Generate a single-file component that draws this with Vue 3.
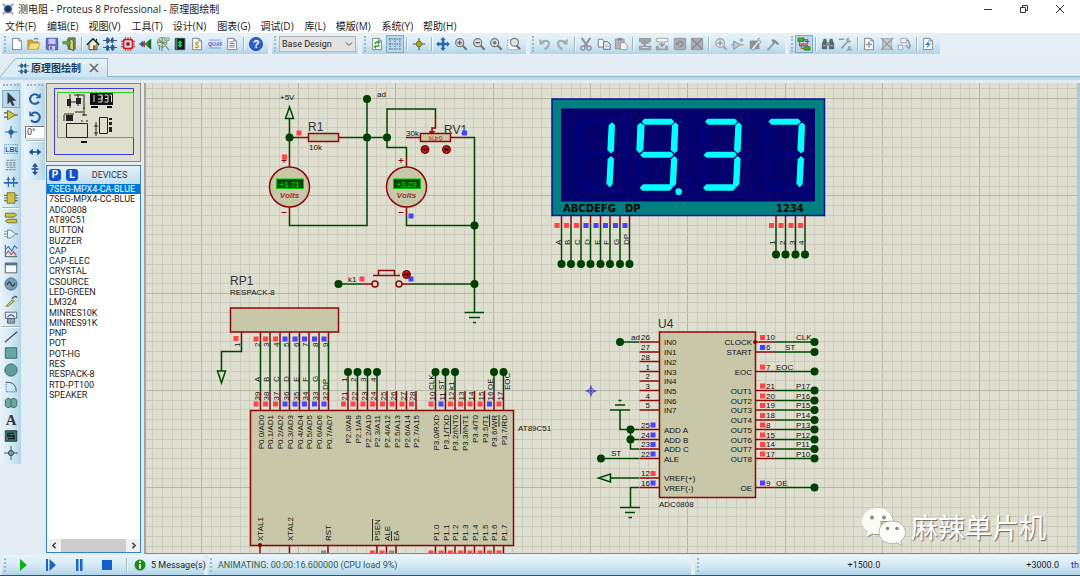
<script setup>
import { ref } from 'vue'

const menus = ['文件(F)', '编辑(E)', '视图(V)', '工具(T)', '设计(N)', '图表(G)', '调试(D)', '库(L)', '模版(M)', '系统(Y)', '帮助(H)']

const devices = ['7SEG-MPX4-CA-BLUE', '7SEG-MPX4-CC-BLUE', 'ADC0808', 'AT89C51', 'BUTTON', 'BUZZER', 'CAP', 'CAP-ELEC', 'CRYSTAL', 'CSOURCE', 'LED-GREEN', 'LM324', 'MINRES10K', 'MINRES91K', 'PNP', 'POT', 'POT-HG', 'RES', 'RESPACK-8', 'RTD-PT100', 'SPEAKER']
const selected = ref('7SEG-MPX4-CA-BLUE')
const angle = ref('0°')
const variant = ref('Base Design')

const sheet = '<path d="M3 1.5h7l3 3v10H3z" fill="#fff" stroke="#777"/><path d="M10 1.5v3h3" fill="none" stroke="#777"/>'
const lens = '<path d="M9.5 9.5l5 5" stroke="#777" stroke-width="2.6"/><circle cx="6.5" cy="6.5" r="4.6" fill="#d8dcdc" stroke="#777" stroke-width="1.4"/>'
const icons = {
  new: sheet,
  open: '<path d="M1 3.5h5l1 2h6v8H1z" fill="#d9a83a" stroke="#b5852a"/><path d="M1 14l3-7h11l-3 7z" fill="#fbe08c" stroke="#c99b3c"/><path d="M8 3q3-3 5 0" fill="none" stroke="#4a88c0" stroke-width="1.3"/>',
  save: '<path d="M1.5 1.5h13v13h-12l-1-1z" fill="#6a6fc8" stroke="#4248a0"/><path d="M4 2h8v6H4z" fill="#c6ccf2"/><path d="M4.5 10.5h7v4h-7z" fill="#dde"/><path d="M6 11h2v3H6z" fill="#444a9a"/>',
  exit: '<path d="M7 1h8v13H7z" fill="#8c8a4a" stroke="#565632"/><path d="M9 2l4 2v12l-4-3z" fill="#d8d68c" stroke="#55522e"/><path d="M1 5h5V2.5l4 4-4 4V8H1z" fill="#60a838" stroke="#42762c" stroke-width=".7"/>',
  home: '<path d="M3.5 8v6.5h9V8" fill="#f3ecc0" stroke="#333"/><path d="M1 9l7-7 7 7" fill="none" stroke="#222" stroke-width="1.8"/><path d="M8 9.5h3v5H8z" fill="#c04820"/><path d="M12 2v4" stroke="#333" stroke-width="1.5"/>',
  schematic: '<path d="M0 4h16M0 12h16" stroke="#264a68"/><path d="M5 0v8M5 9v7M11 0v7M11 8v8" stroke="#264a68"/><path d="M3.5 1.5h4v5h-4zM9 1.5h3v5H9zM3.5 10h3.5v5H3.5zM9 9.5h4v5H9z" fill="#2d5f86"/>',
  pcb: '<path d="M5 0v16M8 0v16M11 0v16M0 5h16M0 8h16M0 11h16" stroke="#e04040" stroke-width="1.2"/><rect x="3" y="3" width="10" height="10" rx="1.5" fill="#fff" stroke="#d41818" stroke-width="2"/><path d="M6 6h4v4H6z" fill="#a01010"/>',
  view3d: '<path d="M1 8l5-4v8z" fill="#2a6fa0"/><path d="M7 8l8-6v12z" fill="#26a042"/><path d="M4 8l4-4v8z" fill="#b03030"/><path d="M11 5l4-3v12l-4-3z" fill="#167030"/>',
  gerber: '<circle cx="7" cy="6" r="5.5" fill="#cde0cb" stroke="#6d8a6d"/><path d="M2 6h10M7 1v10M3 3l8 6M4 15V9M7 16v-6M11 10l4 5" stroke="#698b69" fill="none" stroke-width="1.2"/><path d="M10 1h5v3h-5z" fill="#b8d0b8" stroke="#6d8a6d" stroke-width=".7"/>',
  explorer: '<path d="M2.5 1.5h11v13h-11z" fill="#111" stroke="#3c5a50"/><path d="M8 4v8M5.5 6.5h5M5.5 9.500h5" stroke="#19c95c" stroke-width="2"/><path d="M3 2h2v12H3z" fill="#5f7a70"/>',
  bom: sheet + '<text x="5" y="12.5" font-size="10" font-family="Liberation Sans" fill="#9a8a28">$</text>',
  source: '<path d="M1 3.5h14M1 12.5h14" stroke="#8390d8"/><text x="0" y="10.5" font-size="6" font-weight="bold" font-family="Liberation Sans" fill="#4c5cc8">QUAP</text>',
  notes: sheet + '<path d="M5 5.5h5M5 7.5h6M5 9.5h6M5 11.5h6" stroke="#777"/>',
  help: '<circle cx="8" cy="8" r="7.5" fill="#2f62cc" stroke="#1d3f94"/><path d="M3 6q5-6 10 0" fill="#6f9aec" opacity=".7"/><text x="4.5" y="12.5" font-size="12" font-weight="bold" font-family="Liberation Sans" fill="#fff">?</text>',
  refresh: sheet + '<path d="M5 8q0-3.500 4-3V3l3 3-3 2.500V7Q7 6.500 7 8zM11 8.500q0 3.500-4 3V14l-3-3 3-2.500V10q2 .5 2-1.500z" fill="#38a038"/>',
  grid: '<path d="M2.5 1v14M8 1v14M13.5 1v14M1 2.5h14M1 8h14M1 13.5h14" stroke="#5a7894" stroke-width="1.5" stroke-dasharray="1.5 1.5"/>',
  origin: '<path d="M8 1v14M1 8h14" stroke="#555" stroke-width="1.3"/><circle cx="8" cy="8" r="3.2" fill="#b3a52a" stroke="#6d661e"/>',
  pan: '<path d="M8 0l3 3.500H9.500v3h3V5L16 8l-3.500 3V9.500h-3v3H11L8 16l-3-3.500h1.500v-3h-3V11L0 8l3.500-3v1.500h3v-3H5z" fill="#2a66b8"/>',
  zoomIn: lens + '<path d="M4 6.5h5M6.5 4v5" stroke="#444" stroke-width="1.2"/>',
  zoomOut: lens + '<path d="M4 6.5h5" stroke="#444" stroke-width="1.2"/>',
  zoomAll: lens + '<circle cx="6.5" cy="6.5" r="2" fill="#777"/>',
  zoomArea: '<path d="M.5 3.5h12v11H.5z" fill="#f4f8fa" stroke="#789" stroke-dasharray="1.5 1.5"/><path d="M11 10l4 4" stroke="#777" stroke-width="2.5"/><circle cx="8.5" cy="6" r="4.5" fill="#dfe5e8" stroke="#777" stroke-width="1.3"/>',
  undo: '<path d="M3.5 6Q13 2 12.5 8q-.5 4-5 6" fill="none" stroke="#a3adb3" stroke-width="2.4"/><path d="M1 2l1 7 6-2z" fill="#a3adb3"/>',
  redo: '<path d="M12.5 6Q3 2 3.5 8q.5 4 5 6" fill="none" stroke="#a3adb3" stroke-width="2.4"/><path d="M15 2l-1 7-6-2z" fill="#a3adb3"/>',
  cut: '<path d="M3 1l7 10M13 1L6 11" stroke="#949a9d" stroke-width="2.6"/><circle cx="4.5" cy="12.5" r="2.3" fill="none" stroke="#949a9d" stroke-width="1.8"/><circle cx="11.5" cy="12.5" r="2.3" fill="none" stroke="#949a9d" stroke-width="1.8"/>',
  copy: '<path d="M1.5 2.5H6l2 2v7H1.5z" fill="#f4f6fa" stroke="#68708a"/><path d="M7.5 5.5H12l3 2.5v6H7.5z" fill="#f4f6fa" stroke="#535b7c"/><path d="M9 9h4M9 11h5" stroke="#9aa"/>',
  paste: '<path d="M1.5 2.5h10v11h-10z" fill="#b4b4b0" stroke="#8f908e"/><path d="M4 1h5v3H4z" fill="#8b8c8c"/><path d="M7.5 6.5H12l3 3v5H7.5z" fill="#f3f3f3" stroke="#999"/>',
  blockCopy: '<path d="M1 1h14v5h-3l1 2H9v2h6v5H1v-5h5V8H3l1-2H1z" fill="#9ba1a4"/><path d="M4 12h8" stroke="#dde"/>',
  blockMove: '<path d="M1.5 1.5h13v4h-4v3h-5v-3h-4z" fill="#eef2f4" stroke="#9ba1a4"/><path d="M7 5h2v3h3l-4 4-4-4h3zM1 10h3l1 3h6l1-3h3v5H1z" fill="#9ba1a4"/>',
  blockRotate: '<path d="M1.5 1.5h13v13h-13z" fill="#a9aeb0" stroke="#94999b"/><path d="M5 9q0-4 4-4 3 1 2 4-1 2-4 2M3 8h4" fill="none" stroke="#8a8f92" stroke-width="1.5"/>',
  blockDelete: '<path d="M1.5 1.5h13v13h-13z" fill="#a9aeb0" stroke="#94999b"/><path d="M2 2l12 12M14 2L2 14" stroke="#868b8e" stroke-width="1.5"/>',
  pick: '<path d="M10 10l4.5 4.5" stroke="#a4abae" stroke-width="2.5"/><circle cx="7" cy="7" r="5" fill="#dbe4e8" stroke="#a4abae" stroke-width="1.5"/><path d="M4 7h6M7 4v6" stroke="#a4abae" stroke-width="2"/>',
  makeDevice: '<path d="M3 5l8 4-8 5zM0 9h3M11 9h4M12 1v5M9.5 3.5h5" fill="#c9cfd2" stroke="#9ba3a7" stroke-width="1.4"/>',
  package: '<path d="M2 4h11v10H2z" fill="#8d9294"/><path d="M4 13l7-8q-1-3 2-4l-1 3 3 1q0 3-3 2L6 15z" fill="#f1f3f4" stroke="#858a8d" stroke-width=".8"/>',
  decompose: '<path d="M2 15l8-9" stroke="#9a9fa2" stroke-width="2.4"/><path d="M6 3q4-2 9 5l-2 1-3-3-2 1z" fill="#858b8e"/>',
  router: '<path d="M1 1h7v4H1zM8 11h7v4H8z" fill="#3fae2a" stroke="#1f6a18" stroke-width=".7"/><path d="M8 3h4v5H5v5h3" fill="none" stroke="#e04c28" stroke-width="1.5"/><path d="M3 5v5h9v1M9 5h5" fill="none" stroke="#2d62d0" stroke-width="1.3"/>',
  search: '<path d="M3 2h3l1 4v8H1V8zM13 2h-3L9 6v8h6V8z" fill="#5a6870"/><path d="M6 6h4v4H6z" fill="#83929a"/><path d="M2.5 10h3M10.5 10h3" stroke="#b9c6cc"/>',
  property: '<path d="M1 2.5h6M4 13L12 4" stroke="#929a9e" stroke-width="1.8"/><path d="M9 3q1-3 4-2l-1 3h3q0 3-4 2z" fill="#9da5a8"/><text x="10" y="15.5" font-size="8" font-weight="bold" font-family="Liberation Sans" fill="#8c9498">A</text>',
  newSheet: sheet + '<path d="M8 5v7M4.5 8.5h7" stroke="#9aa1a5" stroke-width="2"/>',
  removeSheet: '<path d="M3 2h10v12H3z" fill="#c9ced1" stroke="#969c9f"/><path d="M1 1l14 14M15 1L1 15" stroke="#8f9598" stroke-width="1.5"/>',
  goSheet: '<path d="M4.5 1.5H11v5H4.5zM1.5 9.5h5v5h-5z" fill="#eef1f2" stroke="#a0a6aa"/><path d="M11 3q4 2 3 7M10 9l3.5 4L16 9" fill="none" stroke="#8f9699" stroke-width="1.5"/>',
  erc: sheet + '<path d="M9.5 3.5L4.5 9h3l-1 4 5-5.500H8.500z" fill="#2c8fe8"/>',
  select: '<path d="M4 0l10 10H9.500l2.500 5-2.500 1-2.500-5-3 3z" fill="#333b44"/>',
  component: '<path d="M0 5.5h4M0 10.5h4M12 8h4" stroke="#555" stroke-width="1.3"/><path d="M4 2.5L13 8l-9 5.5z" fill="#d2c63c" stroke="#6f6a28"/>',
  junction: '<path d="M8 1v14M1 8h14" stroke="#42617c" stroke-width="1.3"/><circle cx="8" cy="8" r="3" fill="#1f64b4"/>',
  label: '<path d="M.5 3h15v10H.5z" fill="none" stroke="#4c7eb0" stroke-dasharray="1 1"/><text x="1.5" y="11" font-size="8" font-weight="bold" font-family="Liberation Sans" fill="#2a5f96">LBL</text>',
  script: '<path d="M3 2.5h10M2 5.5h12M2 8h12M3 10.5h10M2 13.5h12" stroke="#6b7a86" stroke-width="1.2" stroke-dasharray="3 1"/>',
  bus: '<path d="M0 9h16" stroke="#2a6ab4" stroke-width="2"/><path d="M5 2v12M11 2v12M3 5h4M9 5h4" stroke="#2a6ab4" stroke-width="1.4"/>',
  subcircuit: '<path d="M0 5h16M0 8h16M0 11h16" stroke="#777" stroke-width="1.2"/><path d="M3.5 2h9v12h-9z" fill="#cfc244" stroke="#716b2c"/>',
  terminal: '<path d="M1.5 2.5h10l3 2-3 2.5h-10zM4.5 9.5h10v4h-10l-3-2z" fill="#cfc244" stroke="#6d6930"/>',
  pin: '<path d="M0 8h3M13 8h3" stroke="#4a8590" stroke-width="1.3"/><path d="M4 3.5h4L13 8l-5 4.500H4z" fill="#e6eff3" stroke="#627888"/><path d="M0 5h4M0 11h4" stroke="#8aa"/>',
  graph: '<path d="M1.5 1v13.5H15" fill="none" stroke="#444"/><path d="M2 6l3-3 4 5 3-6 3 3" fill="none" stroke="#2d6dc0" stroke-width="1.2"/><path d="M2 12l3-4 3 4 3-3 3 4" fill="none" stroke="#c04040" stroke-width="1.2"/>',
  tape: '<path d="M1.5 2.5h13v11h-13z" fill="#f6fafc" stroke="#555"/><path d="M1 2h14v3H1z" fill="#56718c"/>',
  generator: '<circle cx="8" cy="8" r="7" fill="#7c9ab0" stroke="#4a6478"/><path d="M3.5 9q2-6 4.500-1t4.500-1" fill="none" stroke="#1f3f6c" stroke-width="1.5"/>',
  probe: '<path d="M2 14l7-7 3 1-7 6z" fill="#d3c548" stroke="#6d6928" stroke-width=".8"/><path d="M9 6q3-5 6-2" fill="none" stroke="#555" stroke-width="1.5"/>',
  instrument: '<path d="M1.5 2.5h13v7h-13z" fill="#e9eff2" stroke="#4e5a64"/><path d="M4 8q4-5 8 0" fill="none" stroke="#2f66b0" stroke-width="1.3"/><path d="M4 10h8v5H4z" fill="#9aa" stroke="#4e5a64"/>',
  line: '<path d="M1 14L15 2" stroke="#444" stroke-width="1.2"/>',
  box: '<path d="M1.500 2h13v12h-13z" fill="#66a8a4" stroke="#3c5c60"/>',
  circle: '<circle cx="8" cy="8" r="7" fill="#5d9f9c" stroke="#3c5c60"/>',
  arc: '<path d="M2.5 2v11.500H14" fill="none" stroke="#3c74c0" stroke-dasharray="1.5 1"/><path d="M2.5 2.5Q14 2 14 13" fill="none" stroke="#444"/>',
  path: '<path d="M8 4Q4 1 1.500 5v6q2.500 4 6.500 1 4 3 6.500-1V5Q12 1 8 4z" fill="#6bab9f" stroke="#3b5d58"/><path d="M8 4v8" stroke="#3b5d58"/>',
  text: '<text x="2" y="14" font-size="17" font-weight="bold" font-family="Liberation Serif" fill="#333">A</text>',
  symbol: '<path d="M1.500 2h13v12h-13z" fill="#3a7c78" stroke="#222"/><path d="M11.5 5h-7v3h7v3h-7" fill="none" stroke="#111" stroke-width="1.6"/>',
  marker: '<path d="M8 0v16M0 8h16" stroke="#444"/><circle cx="8" cy="8" r="3" fill="#6a9c98" stroke="#345"/>',
  rotateCw: '<path d="M12.5 11A5.500 5.500 0 1 1 11.500 4" fill="none" stroke="#2a5c9c" stroke-width="2.4"/><path d="M14.5 1v6h-6z" fill="#2a5c9c"/>',
  rotateCcw: '<path d="M3.5 11.5A5.500 5.500 0 1 0 4.500 4" fill="none" stroke="#2a5c9c" stroke-width="2.4"/><path d="M1.5 1v6h6z" fill="#2a5c9c"/>',
  mirrorH: '<path d="M3 8h10" stroke="#1f4f8c" stroke-width="1.8"/><path d="M5.5 4v8L1 8zM10.5 4v8L15 8z" fill="#1f4f8c"/>',
  mirrorV: '<path d="M8 3v10M4 8h8" stroke="#1f4f8c" stroke-width="1.8"/><path d="M4.5 5.5h7L8 1zM4.5 11h7L8 15z" fill="#1f4f8c"/>'
}

const fileTools = ['new', 'open', 'save', 'exit', '|', 'home', 'schematic', 'pcb', 'view3d', 'gerber', 'explorer', 'bom', 'source', 'notes', '|', 'help']
const viewTools = ['refresh', 'grid', '|', 'origin', '|', 'pan', 'zoomIn', 'zoomOut', 'zoomAll', 'zoomArea']
const editTools = ['undo', 'redo', '|', 'cut', 'copy', 'paste', '|', 'blockCopy', 'blockMove', 'blockRotate', 'blockDelete', '|', 'pick', 'makeDevice', 'package', 'decompose']
const designTools = ['router', '|', 'search', 'property', '|', 'newSheet', 'removeSheet', 'goSheet', '|', 'erc']
const modeTools = ['select', 'component', 'junction', 'label', 'script', 'bus', 'subcircuit', '|', 'terminal', 'pin', 'graph', 'tape', 'generator', 'probe', 'instrument', '|', 'line', 'box', 'circle', 'arc', 'path', 'text', 'symbol', 'marker']
const active = ['grid', 'router', 'select']

/* Schematic grid: ten minor steps to each major step, counted from the sheet origin. */
const ORIGIN = { x: 590.5, y: 390.5 }
const STEP = 9.73
const gridLines = (o, from, to) => {
  const out = []
  for (let k = Math.ceil((from - o) / STEP); o + k * STEP < to; k++) {
    out.push({ at: Math.floor(o + k * STEP) + 0.5, major: k % 10 === 0 })
  }
  return out
}
const columns = gridLines(ORIGIN.x, 145, 2600)
const rows = gridLines(ORIGIN.y, 83, 1600)
const run = (x, n) => Array.from({ length: n }, (_, i) => Math.round((x + i * STEP) * 2) / 2)

const R = '#ff4545'
const B = '#4545ff'

const packPins = run(260.5, 8).map((x, i) => ({ x, top: i + 2, bottom: 39 - i, net: ['A', 'B', 'C', 'D', 'E', 'F', 'G', 'DP'][i], name: `P0.${i}/AD${i}`, color: i < 3 ? R : B }))
const p2 = run(348, 8).map((x, i) => ({ x, num: 21 + i, name: `P2.${i}/A${i + 8}`, net: i < 4 ? String(i + 1) : '', color: R, netY: 382 }))
const p3Names = ['RXD', 'TXD', 'INT0', 'INT1', 'T0', 'T1', 'WR', 'RD']
const p3Nets = ['CLK', 'ST', 'k1', '', '', '', 'OE', 'EOC']
const bars = { 2: 19, 3: 19, 6: 12, 7: 12 }
const p3 = run(435.6, 8).map((x, i) => ({ x, num: 10 + i, name: `P3.${i}/${p3Names[i]}`, net: p3Nets[i], color: i === 1 || i === 6 ? B : R, netY: 390, bar: bars[i], shift: i === 7 ? 8 : 0 }))
const upper = [...p2, ...p3]
const lower = [
  { x: 260, name: 'XTAL1' }, { x: 289.5, name: 'XTAL2' }, { x: 328, name: 'RST', color: '#888' },
  { x: 377, name: 'PSEN', color: R, bar: 22 }, { x: 386.5, name: 'ALE', color: R }, { x: 396, name: 'EA', color: '#888', bar: 10 },
  ...run(435.6, 8).map((x, i) => ({ x, name: `P1.${i}`, color: R }))
]

const adcLeft = [
  ['IN0', 26, 342], ['IN1', 27, 352], ['IN2', 28, 361.5], ['IN3', 1, 371.5], ['IN4', 2, 381], ['IN5', 3, 390.5], ['IN6', 4, 400.5], ['IN7', 5, 410],
  ['ADD A', 25, 429.5, B], ['ADD B', 24, 439.5, B], ['ADD C', 23, 449, B], ['ALE', 22, 458.5, B], ['VREF(+)', 12, 478, R], ['VREF(-)', 16, 487.5, B]
]
const adcRight = [
  ['CLOCK', 10, 342, R, 'CLK', 796], ['START', 6, 352, B, 'ST', 785], ['EOC', 7, 371.5, R, 'EOC', 776],
  ['OUT1', 21, 390.5, R, 'P17', 796], ['OUT2', 20, 400.5, R, 'P16', 796], ['OUT3', 19, 410, R, 'P15', 796], ['OUT4', 18, 420, R, 'P14', 796],
  ['OUT5', 8, 429.5, R, 'P13', 796], ['OUT6', 15, 439.5, R, 'P12', 796], ['OUT7', 14, 449, R, 'P11', 796], ['OUT8', 17, 458.5, R, 'P10', 796],
  ['OE', 9, 487.5, B, 'OE', 776]
]

const segments = {
  a: '100,95 108,86 190,86 198,95 188,104 110,104',
  b: '201,97 210,105 207,183 198,190 187,180 191,106',
  c: '198,198 207,206 203,283 194,292 184,284 188,208',
  d: '94,293 104,283 186,283 193,293 184,302 102,302',
  e: '94,198 104,206 100,283 93,292 83,284 85,206',
  f: '96,98 109,106 105,180 94,190 84,181 87,106',
  g: '95,195 106,185 188,185 196,194 186,203 105,203'
}
const digits = ['bc', 'abcdfg.', 'abcdg', 'abc']
const ledPins = [
  ...run(561.5, 8).map((x, i) => ({ x, end: 264, label: ['A', 'B', 'C', 'D', 'E', 'F', 'G', 'DP'][i], color: i < 3 ? R : B })),
  ...run(776, 4).map((x, i) => ({ x, end: 254.5, label: String(i + 1), color: R }))
]
const dots = [[289.5, 137.5], [367, 137.5], [387, 137.5], [367, 99], [474.5, 225.5], [338.5, 284], [474.5, 284], [620, 342], [630.5, 429.5], [630.5, 439.5], [601, 458.5]]
const states = [[299, 133, R], [284.5, 157, R], [411, 216, B], [464.5, 133, B], [362, 279, R], [411, 279, B], [236, 338.5, R]]
</script>

<template>
  <div class="window">
    <header class="titlebar">
      <svg class="logo" viewBox="0 0 16 16"><path d="M1 1l3 3M15 1l-3 3M1 15l3-3M15 15l-3-3" stroke="#7f93ad" stroke-width="2" /><circle cx="8" cy="8" r="5.5" fill="#2c4c80" stroke="#9fb3cb" /><circle cx="8" cy="8" r="3" fill="#173260" /></svg>
      <h1>测电阻 - Proteus 8 Professional - 原理图绘制</h1>
      <div class="controls">
        <button aria-label="Minimize"><svg viewBox="0 0 10 10"><path d="M1 5.5h8" /></svg></button>
        <button aria-label="Restore"><svg viewBox="0 0 10 10"><path d="M1.5 3.5h5v5h-5zM3.5 3V1.5h5v5H7" /></svg></button>
        <button aria-label="Close"><svg viewBox="0 0 10 10"><path d="M1 1l8 8M9 1L1 9" /></svg></button>
      </div>
    </header>

    <nav class="menubar">
      <button v-for="m in menus" :key="m">{{ m }}</button>
    </nav>

    <div class="toolbars">
      <div class="group g-file">
        <template v-for="(t, i) in fileTools" :key="i">
          <span v-if="t === '|'" class="sep"></span>
          <button v-else class="tool" :aria-label="t"><svg viewBox="0 0 16 16" v-html="icons[t]"></svg></button>
        </template>
      </div>
      <div class="group g-variant">
        <select v-model="variant" aria-label="Design variant"><option>Base Design</option></select>
        <svg class="chevron" viewBox="0 0 8 8"><path d="M1 2.5l3 3 3-3" fill="none" stroke="#555" /></svg>
      </div>
      <div class="group g-view">
        <template v-for="(t, i) in viewTools" :key="i">
          <span v-if="t === '|'" class="sep"></span>
          <button v-else class="tool" :class="{ active: active.includes(t) }" :aria-label="t"><svg viewBox="0 0 16 16" v-html="icons[t]"></svg></button>
        </template>
      </div>
      <div class="group g-edit">
        <template v-for="(t, i) in editTools" :key="i">
          <span v-if="t === '|'" class="sep"></span>
          <button v-else class="tool" :aria-label="t"><svg viewBox="0 0 16 16" v-html="icons[t]"></svg></button>
        </template>
      </div>
      <div class="group g-design">
        <template v-for="(t, i) in designTools" :key="i">
          <span v-if="t === '|'" class="sep"></span>
          <button v-else class="tool" :class="{ active: active.includes(t) }" :aria-label="t"><svg viewBox="0 0 16 16" v-html="icons[t]"></svg></button>
        </template>
      </div>
    </div>

    <div class="tabs">
      <svg class="slant" viewBox="0 0 18 19"><path d="M0 19L14 2Q15 .5 18 .5V19z" fill="#dcedf6" /><path d="M0 19L14 2Q15 .5 18 .5" fill="none" stroke="#8fb9cf" /></svg>
      <div class="tab">
        <svg viewBox="0 0 16 16" v-html="icons.schematic"></svg>
        <span>原理图绘制</span>
        <button aria-label="Close tab"><svg viewBox="0 0 10 10"><path d="M1 1l8 8M9 1L1 9" stroke="#666" stroke-width="1.6" /></svg></button>
      </div>
    </div>

    <main class="workspace">
      <div class="rail modes">
        <template v-for="(t, i) in modeTools" :key="i">
          <span v-if="t === '|'" class="hsep"></span>
          <button v-else class="tool" :class="{ active: active.includes(t) }" :aria-label="t"><svg viewBox="0 0 16 16" v-html="icons[t]"></svg></button>
        </template>
      </div>
      <div class="rail orient">
        <button class="tool" aria-label="Rotate clockwise"><svg viewBox="0 0 16 16" v-html="icons.rotateCw"></svg></button>
        <button class="tool" aria-label="Rotate anticlockwise"><svg viewBox="0 0 16 16" v-html="icons.rotateCcw"></svg></button>
        <input v-model="angle" type="text" aria-label="Angle" />
        <span class="hsep"></span>
        <button class="tool" aria-label="Mirror horizontally"><svg viewBox="0 0 16 16" v-html="icons.mirrorH"></svg></button>
        <button class="tool" aria-label="Mirror vertically"><svg viewBox="0 0 16 16" v-html="icons.mirrorV"></svg></button>
      </div>

      <aside class="side">
        <div class="overview">
          <svg viewBox="0 0 93 76">
            <path d="M7.5 4.5h79v66h-79z" fill="none" stroke="#3b3bd8" />
            <path d="M10.5 8.5h76v45h-76z" fill="none" stroke="#30d030" />
            <path d="M43 9h23v12H43z" fill="#111" />
            <path d="M47 11v7M51 11h4v4h-4v0M55 11v7h-4M57.500 11h3.500v7h-3.500M58 14.500h3M62.500 11h2v7" fill="none" stroke="#ddd" />
            <path d="M44 22h7v2h-7zM60 22h5v2h-5zM34 57h6v2h-6z" fill="#111" />
            <path d="M19.500 39.500h21v14h-21z" fill="none" stroke="#222" />
            <path d="M19 31h7v6h-7zM20 15h4v7h-4zM29 14h5v6h-5zM62 34h3v2h-3zM62 38h3v3h-3zM62 43h3v5h-3z" fill="#222" />
            <path d="M23 10v14M27 11h10v14M31 10v12M20 18h14M17 30h10M28 28h8M17 31v6M37 23v9M35 31h5M49 38v14M47 42h4M47 49h4M34 37h2M39 37h2" fill="none" stroke="#222" />
            <path d="M52.500 33.500h8v16h-8z" fill="none" stroke="#222" />
          </svg>
        </div>
        <section class="devices">
          <header>
            <button class="badge">P</button>
            <button class="badge">L</button>
            <h2>DEVICES</h2>
          </header>
          <ul>
            <li v-for="d in devices" :key="d"><button :class="{ chosen: d === selected }" @click="selected = d">{{ d }}</button></li>
          </ul>
          <div class="hscroll">
            <button aria-label="Scroll left"><svg viewBox="0 0 8 8"><path d="M5 1.5L2.5 4 5 6.5" /></svg></button>
            <span class="thumb"></span>
            <button aria-label="Scroll right"><svg viewBox="0 0 8 8"><path d="M3 1.5L5.5 4 3 6.5" /></svg></button>
          </div>
        </section>
      </aside>

      <section class="sheet">
        <svg class="drawing">
          <g transform="translate(-146 -83)">
            <g class="grid">
              <line v-for="c in columns" :key="'c' + c.at" :x1="c.at" :x2="c.at" y1="80" y2="1600" :class="{ major: c.major }" />
              <line v-for="r in rows" :key="'r' + r.at" :y1="r.at" :y2="r.at" x1="140" x2="2600" :class="{ major: r.major }" />
            </g>

            <g class="wire">
              <path d="M289.500 118V158M289.500 216V225.500H367V99M289.500 137.500H299M348 137.500H387M387 137.500V109H435.500V118M387 137.500V147.500H406.500V158M406.500 216V225.500H474.500M465 137.500H474.500V312.500" />
              <path d="M289.500 107L293.500 118.500H285.500Z" />
              <path d="M338.500 284H362M411 284H474.500M464.500 312.500H484M469 317.500H480M473 322.500H476" />
              <path d="M241.500 342V351.500H221.500V371M217.500 371H225.500L221.500 383Z" />
              <path d="M620 342H639M610 410H630M615 405H625M618.500 400.500H621.500M620 410V429.500H639M630.500 429.500V449H639M630.500 439.500H639M601 458.500H639M610.500 478H639M610.500 474V482L598.500 478ZM639 487.500H630.500V507.500M620 507.500H640M625 512.500H635M628.500 517.500H632" />
            </g>

            <g class="pin">
              <path d="M289.500 158V167M289.500 207V216M406.500 158V167M406.500 207V216M299 137.500H308M338 137.500H348M406 137.500H420M450 137.500H465M435.500 118V128H432V134M429.500 131L432 134L434.500 131" />
              <path d="M362 284H372M402 284H411M373 275.500H400M378.500 275V270.500H394.500V275M241.500 332V342" />
              <circle cx="375" cy="284" r="3" /><circle cx="399" cy="284" r="3" />
            </g>
            <g class="body">
              <rect x="308.500" y="133.500" width="30" height="8" /><rect x="420.500" y="133.500" width="30" height="8" />
              <rect x="230.500" y="308" width="108" height="24" />
              <rect x="250.500" y="410.500" width="263" height="135" />
              <rect x="659.500" y="332" width="96" height="165.500" />
              <circle cx="289.500" cy="187" r="20" /><circle cx="406.500" cy="187" r="20" />
            </g>

            <g v-for="m in [{ x: 289.5, v: '+1.71' }, { x: 406.5, v: '+3.29' }]" :key="m.x">
              <rect :x="m.x - 13" y="179" width="27" height="9.500" fill="#004600" stroke="#00c800" />
              <text class="reading" :x="m.x" y="187">{{ m.v }}</text>
              <text class="volts" :x="m.x" y="198">Volts</text>
              <path class="sign" :d="`M${m.x - 8} 160.500h5M${m.x - 5.5} 158v5M${m.x - 8} 212.500h5`" />
            </g>
            <text class="percent" transform="translate(435.500 135.500) rotate(180)">64%</text>

            <g class="big">
              <text x="308" y="131">R1</text><text x="444" y="134">RV1</text><text x="230" y="285">RP1</text><text x="658" y="328">U4</text>
            </g>
            <g class="small">
              <text x="280" y="100">+5V</text><text x="377" y="97">ad</text><text x="309" y="150">10k</text><text x="406" y="136">30k</text>
              <text x="348" y="282">k1</text><text x="230" y="295">RESPACK-8</text><text x="518" y="431">AT89C51</text>
              <text x="631" y="340">ad</text><text x="611" y="456">ST</text><text x="659" y="507">ADC0808</text>
              <text transform="translate(240 347) rotate(-90)">1</text>
            </g>

            <g v-for="p in packPins" :key="'k' + p.x">
              <path class="pin" :d="`M${p.x} 332V342M${p.x} 391V410`" />
              <path class="wire" :d="`M${p.x} 342V391`" />
              <rect class="state" :x="p.x - 7" y="336.500" :fill="p.color" />
              <rect class="state" :x="p.x - 7" y="401.500" :fill="p.color" />
              <g class="small">
                <text :transform="`translate(${p.x - 1} 347) rotate(-90)`">{{ p.top }}</text>
                <text :transform="`translate(${p.x - 1} 400.500) rotate(-90)`">{{ p.bottom }}</text>
                <text :transform="`translate(${p.x - 1} ${p.net === 'DP' ? 390 : 382}) rotate(-90)`">{{ p.net }}</text>
                <text class="end" :transform="`translate(${p.x + 3} 415) rotate(-90)`">{{ p.name }}</text>
              </g>
            </g>
            <g v-for="p in upper" :key="'u' + p.x">
              <path class="pin" :d="`M${p.x} 391V410`" />
              <template v-if="p.net">
                <path class="wire" :d="`M${p.x} 372V391`" />
                <circle class="dot" :cx="p.x" cy="372" r="4" />
              </template>
              <rect class="state" :x="p.x - 7" y="401.500" :fill="p.color" />
              <path v-if="p.bar" class="over" :d="`M${p.x - 4.5} 415v${p.bar}`" />
              <g class="small">
                <text :transform="`translate(${p.x - 1} 400.500) rotate(-90)`">{{ p.num }}</text>
                <text v-if="p.net" :transform="`translate(${p.x - 1.5 + (p.shift || 0)} ${p.netY}) rotate(-90)`">{{ p.net }}</text>
                <text class="end" :transform="`translate(${p.x + 3} 415) rotate(-90)`">{{ p.name }}</text>
              </g>
            </g>
            <g v-for="p in lower" :key="'l' + p.x">
              <path class="pin" :d="`M${p.x} 546V560`" />
              <rect v-if="p.color" class="state" :x="p.x - 7" y="550.500" :fill="p.color" />
              <path v-if="p.bar" class="over" :d="`M${p.x - 4.5} 541v-${p.bar}`" />
              <text class="small" :transform="`translate(${p.x + 3} 541) rotate(-90)`">{{ p.name }}</text>
            </g>
            <circle cx="260" cy="545" r="2" fill="#8b0000" />
            <circle cx="755" cy="342" r="2" fill="#8b0000" />

            <g v-for="[name, num, y, color] in adcLeft" :key="name">
              <path class="pin" :d="`M639.500 ${y}H659`" />
              <rect v-if="color" class="state" x="650.500" :y="y - 7" :fill="color" />
              <g class="small"><text class="end" x="650" :y="y - 2">{{ num }}</text><text x="664" :y="y + 3">{{ name }}</text></g>
            </g>
            <g v-for="[name, num, y, color, net, nx] in adcRight" :key="name + num">
              <path class="pin" :d="`M756 ${y}H776`" />
              <path class="wire" :d="`M776 ${y}H815`" />
              <circle class="dot" cx="814.500" :cy="y" r="4" />
              <rect class="state" x="760" :y="y - 7" :fill="color" />
              <g class="small"><text class="end" x="752" :y="y + 3">{{ name }}</text><text x="766" :y="y - 2">{{ num }}</text><text :x="nx" :y="y - 2">{{ net }}</text></g>
            </g>

            <rect x="552" y="99" width="272.500" height="116.500" fill="#008080" stroke="#10109c" stroke-width="1.500" />
            <rect x="561" y="108.500" width="254" height="93" fill="#04006c" />
            <path d="M624.500 109V201M688 109V201M751.500 109V201" stroke="#000080" />
            <g transform="translate(545 90) scale(.33333)">
              <g v-for="(d, i) in digits" :key="i" :transform="`translate(${i * 190} 0)`">
                <polygon v-for="(pts, s) in segments" :key="s" :points="pts" :fill="d.includes(s) ? '#00ffff' : '#000078'" />
                <circle cx="211" cy="305" r="10" :fill="d.includes('.') ? '#00ffff' : '#000078'" />
              </g>
            </g>
            <g class="legend"><text x="563" y="212">ABCDEFG</text><text x="625" y="212">DP</text><text x="776" y="212">1234</text></g>
            <g v-for="p in ledPins" :key="'s' + p.x">
              <path class="pin" :d="`M${p.x} 216V226`" />
              <path class="wire" :d="`M${p.x} 226V${p.end}`" />
              <circle class="dot" :cx="p.x" :cy="p.end" r="4" />
              <rect class="state" :x="p.x - 7" y="223" :fill="p.color" />
              <text class="small" :transform="`translate(${p.x - 1} 245) rotate(-90)`">{{ p.label }}</text>
            </g>

            <circle v-for="([x, y], i) in dots" :key="'d' + i" class="dot" :cx="x" :cy="y" r="4" />
            <rect v-for="([x, y, c], i) in states" :key="'q' + i" class="state" :x="x - 2.5" :y="y - 2.5" :fill="c" />
            <g v-for="([x, y], i) in [[425, 149.5], [446.5, 149.5], [406.5, 274.5]]" :key="'a' + i">
              <circle :cx="x" :cy="y" r="4" fill="#d01010" stroke="#6a0000" />
              <path :d="`M${x - 2.5} ${y}h5M${x} ${y - 1.5}v3`" stroke="#300" stroke-width="1.500" />
            </g>
            <path d="M585.500 391H596.500M591 385.500V396.500M591 387.500L594.500 391L591 394.500L587.500 391Z" fill="none" stroke="#2828c8" />
          </g>
        </svg>

        <div class="watermark">
          <svg viewBox="0 0 44 38">
            <path d="M17 1C8 1 1 7 1 14.500c0 4 2 7.500 6 10L5.500 29.500l6-3q3 1 8 .8V14h12.700C31 6.500 25 1 17 1z" fill="#777" opacity=".7" />
            <path d="M16 0C7 0 0 6 0 13.500c0 4 2 7.500 6 10L4.500 28.500l6-3q3 1 8 .8V13h12.700C30 5.500 24 0 16 0z" fill="#fbfbf8" />
            <path d="M30 13c-7.500 0-13 5-13 11.300S22.500 35.500 30 35.500q2.500 0 5-.8l5 2.800-1.300-4.500c3-2 4.800-5 4.800-8.700C43.500 18 37.500 13 30 13z" fill="#fbfbf8" stroke="#aaa99c" stroke-width=".8" />
            <g fill="#8b8b80"><circle cx="10" cy="9.500" r="2" /><circle cx="22" cy="9.500" r="2" /><circle cx="25.500" cy="20.500" r="1.800" /><circle cx="35" cy="20.500" r="1.800" /></g>
          </svg>
          <span>麻辣单片机</span>
        </div>
      </section>
    </main>

    <footer class="status">
      <div class="cell transport">
        <button aria-label="Play"><svg viewBox="0 0 12 12"><path d="M3 0l7 6-7 6z" fill="#12b012" /></svg></button>
        <button aria-label="Step"><svg viewBox="0 0 12 12"><path d="M1 0h2v12H1zM4.500 0l6.500 6-6.500 6z" fill="#1c66c8" /></svg></button>
        <button aria-label="Pause"><svg viewBox="0 0 12 12"><path d="M3 0h2.500v12H3zM7 0h2.500v12H7z" fill="#1c66c8" /></svg></button>
        <button aria-label="Stop"><svg viewBox="0 0 12 12"><path d="M1 1h10v10H1z" fill="#1060c8" /></svg></button>
        <span class="sep"></span>
        <svg class="info" viewBox="0 0 12 12"><circle cx="6" cy="6" r="5.500" fill="#189018" /><path d="M5 5h2v4.500H5zM5 2h2v2H5z" fill="#fff" /></svg>
        <span>5 Message(s)</span>
      </div>
      <div class="cell message">ANIMATING: 00:00:16.600000 (CPU load 9%)</div>
      <div class="cell coords"><span>+1500.0</span><span>+3000.0</span><span class="unit">th</span></div>
    </footer>
  </div>
</template>

<style>
html, body, #app { height: 100%; }
</style>

<style scoped>
* { box-sizing: border-box; }
.window { display: flex; flex-direction: column; height: 100%; min-height: 0; overflow: hidden; background: #e4ecf3; color: #222; font: 10px/14px "Open Sans", "Noto Sans CJK SC", sans-serif; }
button { padding: 0; border: 0; background: none; color: inherit; font: inherit; }
h1, h2, ul { margin: 0; padding: 0; font: inherit; list-style: none; }
svg { display: block; flex: none; }

.titlebar { display: flex; align-items: center; height: 18px; padding: 0 2px; background: #fff; }
.logo { width: 12px; height: 12px; margin-right: 4px; }
.controls { display: flex; margin-left: auto; }
.controls button { display: grid; place-items: center; width: 36px; height: 16px; }
.controls svg { width: 10px; height: 10px; fill: none; stroke: #333; }

.menubar { height: 15px; padding-left: 5px; background: #fff; }
.menubar { display: grid; grid-template-columns: repeat(7, auto) repeat(4, auto); justify-content: start; gap: 11px; }
.menubar button { margin-right: -1px; white-space: nowrap; }
.menubar button:nth-child(odd) { margin-right: 0; }

.toolbars { display: flex; gap: 4px; height: 23px; padding: 1px 2px; background: #e6eff6; }
.group { position: relative; display: flex; align-items: center; justify-content: space-between; height: 20px; padding: 0 4px 0 7px; background: linear-gradient(#e6f3fa, #d6eaf5 50%, #b2d5e8); }
.group::before { content: ""; position: absolute; left: 2px; top: 2px; bottom: 2px; border-left: 2px dotted #9db8c8; }
.g-file { width: 266px; }
.g-variant { width: 86px; padding-right: 2px; }
.g-view { width: 164px; }
.g-edit { width: 255px; }
.g-design { width: 151px; }
.tool { display: grid; place-items: center; flex: none; width: 16px; height: 16px; }
.tool svg { width: 14px; height: 14px; }
.active { background: #b9d8ea; outline: 1px solid #7fabc5; }
.sep { flex: none; width: 5px; height: 14px; background: linear-gradient(90deg, transparent 2px, #a4b4bd 2px 3px, #f4fafc 3px 4px, transparent 4px); }
select { width: 100%; height: 16px; padding: 0 2px; border: 1px solid #b5b5b5; border-radius: 0; background: #e2e2e2; color: #222; font: 9px/14px Roboto, sans-serif; appearance: none; }
.chevron { position: absolute; right: 5px; top: 6px; width: 8px; height: 8px; pointer-events: none; }

.tabs { display: flex; align-items: flex-end; height: 24px; padding-top: 2px; border-bottom: 3px solid #b9dbeb; background: #e4ecf3; box-shadow: inset 0 -1px #93b8cb; }
.slant { width: 18px; height: 19px; }
.tab { display: flex; align-items: center; gap: 2px; height: 19px; padding: 0 8px 0 0; border-top: 1px solid #8fb9cf; border-right: 1px solid #8fb9cf; background: linear-gradient(#e6f3f9, #c9e3f0); color: #1c3c58; font-weight: bold; }
.tab > svg { width: 11px; height: 11px; }
.tab button { margin-left: 6px; }
.tab button svg { width: 10px; height: 10px; }

.workspace { display: flex; flex: 1; align-items: flex-start; min-height: 0; padding-top: 3px; }
.rail { display: flex; flex-direction: column; align-items: center; justify-content: space-between; flex: none; background: linear-gradient(90deg, #e8f4fa, #d4e9f4 50%, #b2d5e8); }
.rail::before { content: ""; width: 16px; border-top: 2px dotted #9db8c8; }
.modes { width: 21px; height: 381px; padding: 1px 0 3px; margin-right: 3px; }
.modes::before { margin-bottom: 4px; }
.orient { width: 21px; height: 97px; padding: 1px 0 3px; margin-right: 1px; }
.orient::before { margin-bottom: 4px; }
.hsep { width: 17px; height: 2px; border-top: 1px solid #a4b4bd; background: #f4fafc; }
.orient input { width: 19px; height: 13px; padding: 0 1px; border: 1px solid #777; border-right: 0; border-bottom-color: #ddd; background: #fff; color: #333; font: 9px/11px Roboto, sans-serif; }

.side { display: flex; flex-direction: column; gap: 3px; flex: none; align-self: stretch; width: 95px; margin-right: 3px; padding-bottom: 1px; }
.overview { height: 79px; border: 1px solid #888; background: #dfdfd0; }
.overview svg { width: 93px; height: 76px; }
.devices { display: flex; flex: 1; flex-direction: column; min-height: 0; border: 1px solid #3a80c0; background: #fff; font: 9px/10px Roboto, sans-serif; }
.devices header { display: flex; align-items: center; gap: 5px; height: 18px; padding-left: 2px; background: linear-gradient(#e6f3fa, #c2deed); }
.badge { width: 12px; height: 12px; border-radius: 3px; background: #1450d0; color: #fff; font-size: 10px; font-weight: bold; line-height: 12px; }
.devices h2 { flex: 1; padding-right: 4px; text-align: center; color: #333; }
.devices ul { display: grid; grid-auto-rows: 1fr; height: 216px; }
.devices li button { display: block; width: 100%; height: 100%; padding-left: 2px; text-align: left; white-space: nowrap; }
.devices .chosen { background: #0078d7; color: #fff; }
.hscroll { display: flex; height: 13px; margin-top: auto; background: #f0f0f0; }
.hscroll button { display: grid; place-items: center; width: 14px; }
.hscroll svg { width: 9px; height: 9px; fill: none; stroke: #333; stroke-width: 1.2; }
.thumb { flex: 1; background: #cdcdcd; }

.sheet { position: relative; flex: 1; align-self: stretch; min-width: 0; overflow: hidden; border-left: 2px solid #a5a5a0; border-right: 3px solid #aacbdd; border-bottom: 1px solid #888; background: #dfdfd0; }
.drawing { width: 100%; height: 100%; font-family: "Liberation Sans", sans-serif; }
.grid line { stroke: #ccccbe; }
.grid .major { stroke: #b7b7a9; }
.wire { fill: none; stroke: #004800; stroke-width: 1.5; }
.pin { fill: none; stroke: #8b0a0a; stroke-width: 1.5; }
.body { fill: #c8c8a8; stroke: #8b0a0a; stroke-width: 1.5; }
.dot { fill: #004000; }
.state { width: 5px; height: 5px; }
.over { stroke: #333; }
.big { font-size: 12px; fill: #333; }
.small { font-size: 8px; fill: #111; }
.end { text-anchor: end; }
.reading, .volts, .percent { text-anchor: middle; }
.reading { font-size: 8px; fill: #00f000; }
.volts { font-size: 8px; font-style: italic; font-weight: bold; fill: #96362e; }
.percent { font-size: 7px; fill: #d02020; }
.sign { stroke: #8b0a0a; }
.legend { font: bold 10px "DejaVu Sans", sans-serif; fill: #000; }

.watermark { position: absolute; right: 31px; bottom: 7px; display: flex; align-items: center; gap: 5px; }
.watermark svg { width: 44px; height: 38px; }
.watermark span { color: #fff; font: 27px/32px "Noto Sans CJK SC", sans-serif; text-shadow: 1px 1px 1px #666; }

.status { display: flex; gap: 4px; flex: none; height: 22px; padding: 1px 0 0 2px; border-bottom: 1px solid #444c52; background: #e4ecf3; color: #222; font: 9px/20px Roboto, sans-serif; }
.cell { position: relative; display: flex; align-items: center; background: linear-gradient(#e9f5fb, #d6eaf5 50%, #b2d5e8); white-space: nowrap; }
.cell::before { content: ""; position: absolute; left: 2px; top: 3px; bottom: 3px; border-left: 2px dotted #9db8c8; }
.transport { width: 202px; padding-left: 15px; }
.transport button { margin-right: 16px; }
.transport button svg { width: 12px; height: 12px; }
.transport .sep { margin: 0 5px 0 -5px; }
.transport .info { width: 12px; height: 12px; margin-right: 5px; }
.message { flex: 1; padding-left: 10px; color: #2c5a4a; }
.coords { justify-content: flex-end; width: 385px; padding-right: 1px; }
.coords span:nth-child(2) { margin-left: 146px; }
.coords .unit { margin-left: 12px; color: #2a2aa0; }
</style>
